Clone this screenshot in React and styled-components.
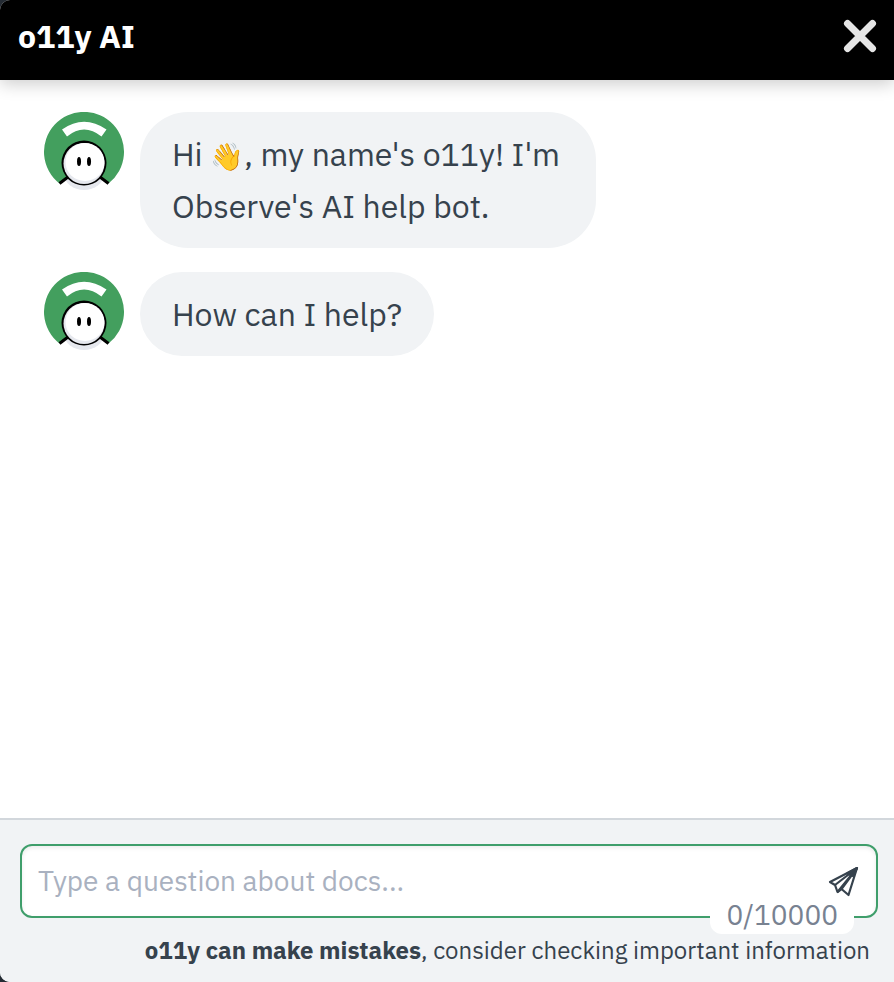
import React, { useState } from "react";
import styled, { createGlobalStyle } from "styled-components";

const MAX_LENGTH = 10000;

const GlobalStyle = createGlobalStyle`
  * {
    box-sizing: border-box;
  }

  body {
    margin: 0;
    background: #242b33;
    font-family: "IBM Plex Sans", Roboto, "Noto Sans", sans-serif;
    color: #36424d;
  }
`;

const Panel = styled.div`
  display: flex;
  flex-direction: column;
  min-height: 100vh;
  background: #fff;
  border-radius: 10px 0 0 10px;
  overflow: hidden;
`;

const Header = styled.header`
  display: flex;
  align-items: center;
  justify-content: space-between;
  height: 80px;
  padding: 0 16px 8px 18px;
  background: #000;
  color: #fff;
  box-shadow: 0 4px 16px rgba(0, 0, 0, 0.2);
`;

const Title = styled.h1`
  margin: 0;
  font-size: 32px;
  line-height: 40px;
  font-weight: 700;
`;

const IconButton = styled.button`
  display: flex;
  padding: 0;
  border: none;
  background: none;
  color: ${({ $color }) => $color};
  cursor: pointer;
`;

const Messages = styled.main`
  flex: 1;
  display: flex;
  flex-direction: column;
  gap: 24px;
  padding: 32px 44px;
`;

const MessageRow = styled.div`
  display: flex;
  align-items: flex-start;
  gap: 16px;
`;

const AvatarIcon = styled.svg`
  flex: none;
  width: 80px;
  height: 80px;
`;

const Bubble = styled.p`
  margin: 0;
  max-width: 456px;
  padding: 16px 32px;
  border-radius: 48px;
  background: #f1f3f5;
  font-size: 32px;
  line-height: 52px;
`;

const Emoji = styled.span`
  font-size: 27px;
  line-height: 32px;
`;

const Footer = styled.footer`
  padding: 24px 16px 16px 20px;
  border-top: 2px solid #d2d7dc;
  background: #f1f3f5;
`;

const Field = styled.form`
  position: relative;
  display: flex;
  align-items: center;
  height: 74px;
  padding: 0 16px;
  border: 2px solid #3f9e6b;
  border-radius: 12px;
  background: #fff;
  box-shadow: inset 0 2px 4px rgba(0, 0, 0, 0.08);
`;

const Input = styled.input`
  flex: 1;
  min-width: 0;
  height: 36px;
  padding: 0 0 2px;
  border: none;
  outline: none;
  background: transparent;
  color: inherit;
  font-family: inherit;
  font-size: 28px;

  &::placeholder {
    color: #a9b1c0;
    opacity: 1;
  }
`;

const Counter = styled.span`
  position: absolute;
  right: 22px;
  bottom: -18px;
  padding: 0 16px;
  border-radius: 12px;
  background: #fff;
  color: #788291;
  font-size: 28px;
  line-height: 38px;
`;

const Note = styled.p`
  margin: 16px 8px 0 0;
  font-size: 24px;
  line-height: 32px;
  text-align: right;
`;

const CloseIcon = () => (
  <svg width="36" height="36" viewBox="0 0 36 36" aria-hidden="true">
    <path
      d="M5.5 5.5L30.500 30.500M30.500 5.500L5.500 30.500"
      stroke="currentColor"
      strokeWidth="7"
      strokeLinecap="round"
    />
  </svg>
);

const SendIcon = () => (
  <svg
    width="32"
    height="32"
    viewBox="0 0 32 32"
    fill="none"
    stroke="currentColor"
    strokeWidth="2.2"
    strokeLinejoin="round"
    aria-hidden="true"
  >
    <path d="M29 3L2 17L7 20L9.500 27L13.500 24L20.500 30Z" />
    <path d="M29 3L7 20M29 3L9.500 27M29 3L13.500 24" />
    <path d="M29 3L19 8.500L25 11Z" fill="currentColor" />
  </svg>
);

const Avatar = () => (
  <AvatarIcon viewBox="0 0 80 80" aria-hidden="true">
    <ellipse cx="40" cy="62" rx="20" ry="16" fill="#e6e8ee" />
    <path d="M15.500 71.500A40 40 0 1 1 64.500 71.500L40 51Z" fill="#439f5e" />
    <path d="M18 17.500Q40 2 62.500 17.500L57.500 24.500Q40 10.500 23 24.500Z" fill="#fff" />
    <path
      d="M15.500 71.500L24 65M64.500 71.500L56 65"
      stroke="#000"
      strokeWidth="3"
    />
    <circle cx="40" cy="51" r="22.500" fill="#000" />
    <circle cx="40" cy="51.500" r="20.500" fill="#e6e8ee" />
    <ellipse cx="41" cy="50" rx="19.500" ry="19" fill="#fff" />
    <ellipse cx="35" cy="49.500" rx="2" ry="4.500" fill="#000" />
    <ellipse cx="45" cy="49.500" rx="2" ry="4.500" fill="#000" />
  </AvatarIcon>
);

const Message = ({ children }) => (
  <MessageRow>
    <Avatar />
    <Bubble>{children}</Bubble>
  </MessageRow>
);

const App = () => {
  const [question, setQuestion] = useState("");

  const handleSubmit = (e) => {
    e.preventDefault();
    setQuestion("");
  };

  return (
    <>
      <GlobalStyle />
      <Panel>
        <Header>
          <Title>o11y AI</Title>
          <IconButton type="button" $color="#e5e5e5" aria-label="Close">
            <CloseIcon />
          </IconButton>
        </Header>
        <Messages>
          <Message>
            Hi <Emoji>👋</Emoji>, my name's o11y! I'm Observe's AI help bot.
          </Message>
          <Message>How can I help?</Message>
        </Messages>
        <Footer>
          <Field onSubmit={handleSubmit}>
            <Input
              aria-label="Question"
              placeholder="Type a question about docs..."
              maxLength={MAX_LENGTH}
              value={question}
              onChange={(e) => setQuestion(e.target.value)}
            />
            <IconButton type="submit" $color="#36424d" aria-label="Send">
              <SendIcon />
            </IconButton>
            <Counter>
              {question.length}/{MAX_LENGTH}
            </Counter>
          </Field>
          <Note>
            <strong>o11y can make mistakes</strong>, consider checking important
            information
          </Note>
        </Footer>
      </Panel>
    </>
  );
};

export default App;
